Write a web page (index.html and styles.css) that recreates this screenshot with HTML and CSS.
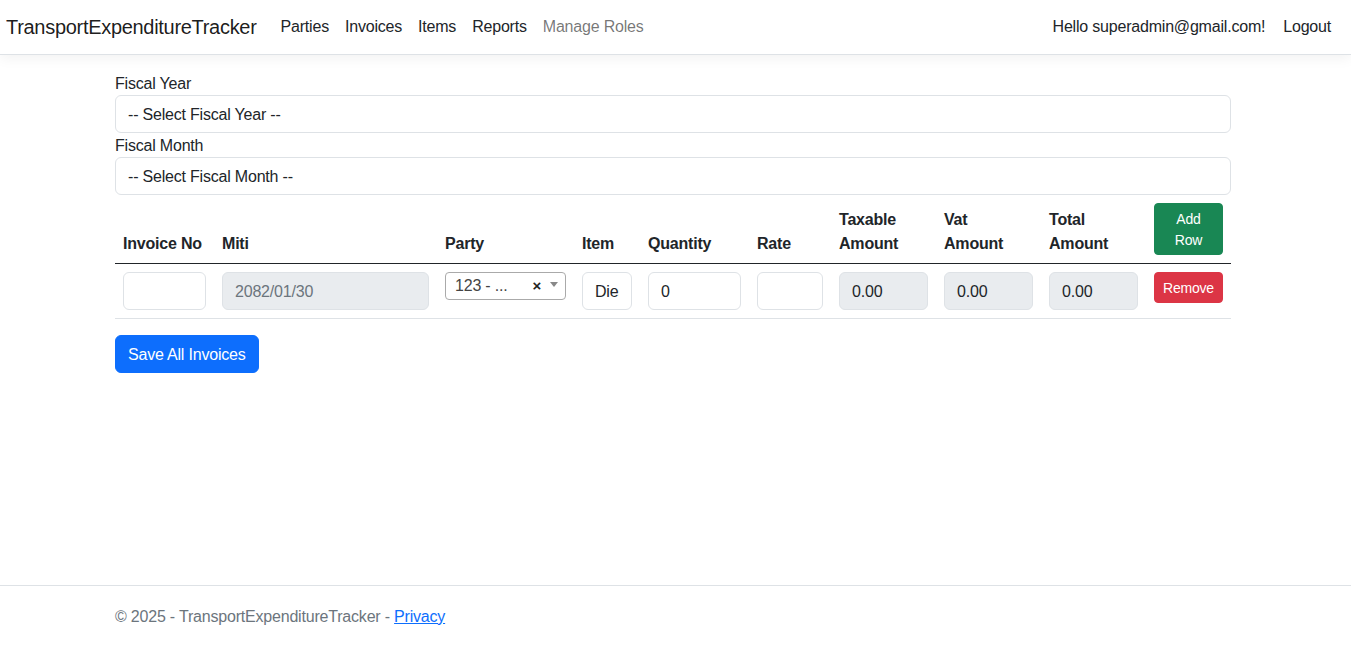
FILE: index.html
```html
<!DOCTYPE html>
<html lang="en">
<head>
<meta charset="utf-8">
<title>TransportExpenditureTracker</title>
<link rel="stylesheet" href="styles.css">
</head>
<body>
<header class="navbar">
  <div class="nav-inner">
    <a class="brand" href="#">TransportExpenditureTracker</a>
    <nav class="nav-links">
      <a class="nav-link" href="#">Parties</a>
      <a class="nav-link" href="#">Invoices</a>
      <a class="nav-link" href="#">Items</a>
      <a class="nav-link" href="#">Reports</a>
      <a class="nav-link muted" href="#">Manage Roles</a>
    </nav>
    <div class="nav-right">
      <span class="nav-link">Hello superadmin@gmail.com!</span>
      <a class="nav-link" href="#">Logout</a>
    </div>
  </div>
</header>

<main class="container">
  <label class="form-label">Fiscal Year</label>
  <div class="form-select">-- Select Fiscal Year --</div>
  <label class="form-label">Fiscal Month</label>
  <div class="form-select">-- Select Fiscal Month --</div>

  <table class="table">
    <colgroup>
      <col class="c-inv"><col class="c-miti"><col class="c-party"><col class="c-item"><col class="c-qty">
      <col class="c-rate"><col class="c-amt"><col class="c-amt"><col class="c-amt"><col class="c-act">
    </colgroup>
    <thead>
      <tr>
        <th>Invoice No</th>
        <th>Miti</th>
        <th>Party</th>
        <th>Item</th>
        <th>Quantity</th>
        <th>Rate</th>
        <th>Taxable<br>Amount</th>
        <th>Vat<br>Amount</th>
        <th>Total<br>Amount</th>
        <th class="th-btn"><button class="btn btn-sm btn-success">Add Row</button></th>
      </tr>
    </thead>
    <tbody>
      <tr>
        <td><input class="form-control" type="text"></td>
        <td><input class="form-control readonly miti" type="text" value="2082/01/30" readonly></td>
        <td>
          <div class="select2">
            <span class="s2-text">123 - ...</span>
            <span class="s2-clear">×</span>
            <span class="s2-arrow"></span>
          </div>
        </td>
        <td><input class="form-control" type="text" value="Diesel"></td>
        <td><input class="form-control" type="text" value="0"></td>
        <td><input class="form-control" type="text"></td>
        <td><input class="form-control readonly" type="text" value="0.00" readonly></td>
        <td><input class="form-control readonly" type="text" value="0.00" readonly></td>
        <td><input class="form-control readonly" type="text" value="0.00" readonly></td>
        <td><button class="btn btn-sm btn-danger">Remove</button></td>
      </tr>
    </tbody>
  </table>

  <button class="btn btn-primary">Save All Invoices</button>
</main>

<footer class="footer">
  <div class="container footer-inner">
    © 2025 - TransportExpenditureTracker - <a href="#">Privacy</a>
  </div>
</footer>
</body>
</html>
```

FILE: styles.css
```css
* { box-sizing: border-box; }

html, body { height: 100%; }

body {
  margin: 0;
  font-family: "Liberation Sans", Arial, sans-serif;
  font-size: 16px;
  line-height: 1.5;
  letter-spacing: -0.2px;
  color: #212529;
  background: #fff;
  display: flex;
  flex-direction: column;
  min-height: 100vh;
}

a { text-decoration: none; }

.navbar {
  height: 55px;
  border-bottom: 1px solid #dee2e6;
  box-shadow: 0 4px 12px rgba(0, 0, 0, 0.05);
  background: #fff;
  margin-bottom: 16px;
  flex: 0 0 auto;
}

.nav-inner {
  height: 53px;
  display: flex;
  align-items: center;
  padding: 0 12px 0 6px;
}

.brand {
  font-size: 20px;
  line-height: 30px;
  letter-spacing: -0.3px;
  color: rgba(0, 0, 0, 0.9);
  margin-right: 16px;
}

.nav-links { display: flex; flex: 1; }

.nav-link {
  padding: 8px;
  color: #212529;
  line-height: 24px;
}

.nav-link.muted { color: rgba(0, 0, 0, 0.55); }

.nav-right { display: flex; gap: 2px; }

.container {
  width: 1140px;
  margin: 0 calc(50% - 567.5px) 0 calc(50% - 572.5px);
  padding: 0 12px;
}

main.container { flex: 1 0 auto; }

.form-label {
  display: block;
  height: 24px;
  line-height: 24px;
  padding-top: 1px;
}

.form-select {
  height: 38px;
  border: 1px solid #dee2e6;
  border-radius: 6px;
  padding: 7px 12px 5px;
  line-height: 24px;
}

.table {
  width: 100%;
  border-collapse: collapse;
  table-layout: fixed;
  margin-bottom: 16px;
}

.c-inv { width: 99px; }
.c-miti { width: 223px; }
.c-party { width: 137px; }
.c-item { width: 66px; }
.c-qty { width: 109px; }
.c-rate { width: 82px; }
.c-amt { width: 105px; }
.c-act { width: 85px; }

.table th {
  text-align: left;
  vertical-align: bottom;
  padding: 8px 8px 7px;
  font-weight: bold;
  line-height: 24px;
  border-bottom: 1px solid #212529;
}

.table th.th-btn { padding: 8px; }

.table td {
  vertical-align: top;
  padding: 8px;
  border-bottom: 1px solid #dee2e6;
}

.form-control {
  display: block;
  width: 100%;
  height: 38px;
  padding: 7px 12px 5px;
  font: inherit;
  font-size: 16px;
  line-height: 24px;
  letter-spacing: -0.2px;
  color: #212529;
  border: 1px solid #dee2e6;
  border-radius: 6px;
  background: #fff;
  outline: none;
}

.form-control.readonly { background: #e9ecef; }
.form-control.miti { color: #6c757d; }

.select2 {
  height: 28px;
  border: 1px solid #aaa;
  border-radius: 4px;
  display: flex;
  align-items: center;
  padding: 0 0 0 9px;
}

.s2-text {
  flex: 1;
  color: #444;
  line-height: 26px;
  font-size: 16px;
}

.s2-clear {
  font-weight: bold;
  font-size: 15px;
  color: #222;
  margin-right: 9px;
  line-height: 26px;
}

.s2-arrow {
  width: 0;
  height: 0;
  border-left: 4px solid transparent;
  border-right: 4px solid transparent;
  border-top: 5px solid #888;
  margin-right: 7px;
  margin-top: -3px;
}

.btn {
  display: inline-block;
  font: inherit;
  font-weight: 400;
  letter-spacing: -0.2px;
  border: 1px solid transparent;
  color: #fff;
  cursor: pointer;
  text-align: center;
}

.btn-sm {
  font-size: 14px;
  line-height: 21px;
  padding: 5px 8px 3px;
  border-radius: 4px;
}

.btn-success {
  background: #198754;
  border-color: #198754;
  width: 100%;
  display: block;
}

.btn-danger {
  background: #dc3545;
  border-color: #dc3545;
}

.btn-primary {
  background: #0d6efd;
  border-color: #0d6efd;
  font-size: 16px;
  line-height: 24px;
  padding: 7px 12px 5px;
  border-radius: 6px;
}

.footer {
  flex: 0 0 auto;
  height: 60px;
  border-top: 1px solid #dee2e6;
  color: #6c757d;
}

.footer-inner { line-height: 61px; }

.footer a {
  color: #0d6efd;
  text-decoration: underline;
}
```
